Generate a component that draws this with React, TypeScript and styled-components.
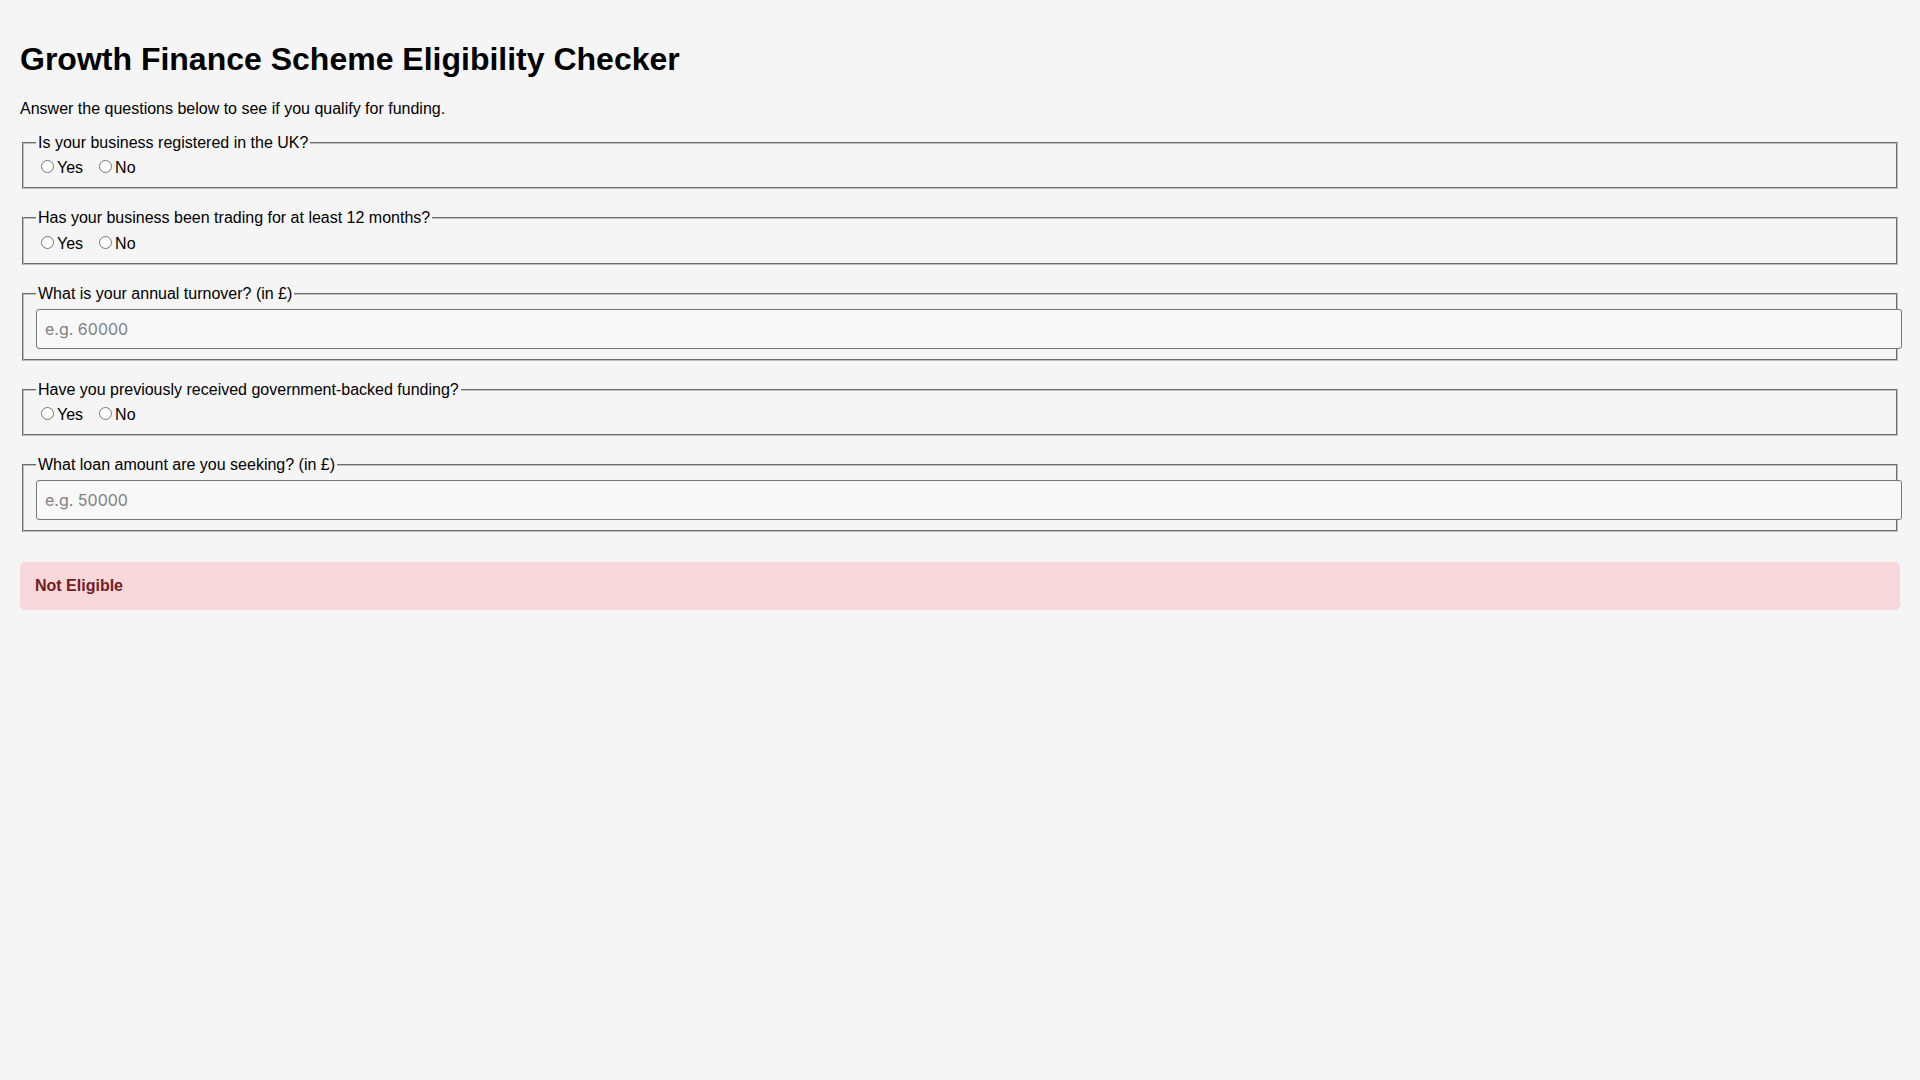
import styled, { createGlobalStyle } from 'styled-components'

const GlobalStyle = createGlobalStyle`
  body {
    margin: 0;
    padding: 20px;
    background: #f5f5f5;
    font-family: "Liberation Sans", Arial, sans-serif;
    color: #000;
  }
`

interface Question {
  id: string
  label: string
  kind: 'radio' | 'number'
  placeholder?: string
}

const QUESTIONS: Question[] = [
  { id: 'registered', label: 'Is your business registered in the UK?', kind: 'radio' },
  { id: 'trading', label: 'Has your business been trading for at least 12 months?', kind: 'radio' },
  { id: 'turnover', label: 'What is your annual turnover? (in £)', kind: 'number', placeholder: 'e.g. 60000' },
  { id: 'funding', label: 'Have you previously received government-backed funding?', kind: 'radio' },
  { id: 'loan', label: 'What loan amount are you seeking? (in £)', kind: 'number', placeholder: 'e.g. 50000' }
]

const App = () => {
  return (
    <>
      <GlobalStyle />
      <Title>Growth Finance Scheme Eligibility Checker</Title>
      <Intro>Answer the questions below to see if you qualify for funding.</Intro>
      <form onSubmit={e => e.preventDefault()}>
        {QUESTIONS.map(q => (
          <Group key={q.id}>
            <legend>{q.label}</legend>
            {q.kind === 'radio' ? (
              <>
                <Choice>
                  <input type="radio" name={q.id} value="yes" />
                  Yes
                </Choice>
                <Choice>
                  <input type="radio" name={q.id} value="no" />
                  No
                </Choice>
              </>
            ) : (
              <AmountInput type="number" name={q.id} placeholder={q.placeholder} />
            )}
          </Group>
        ))}
      </form>
      <Result>Not Eligible</Result>
    </>
  )
}

export default App

const Title = styled.h1`
  font-size: 32px;
  font-weight: bold;
  margin: 0.67em 0;
`

const Intro = styled.p`
  font-size: 16px;
  margin: 17px 0 16px;
`

const Group = styled.fieldset`
  margin: 0 2px 20px;
  padding: 0.35em 0.75em 0.625em;
  border: 2px groove rgb(192, 192, 192);

  legend {
    padding: 0 2px;
    font-size: 16px;
  }
`

const Choice = styled.label`
  font-size: 16px;
  margin-right: 11px;

  input {
    margin: 3px 3px 0 5px;
  }
`

const AmountInput = styled.input`
  width: 100%;
  height: 20px;
  padding: 9px 8px;
  border: 1px solid #767676;
  border-radius: 3px;
  background: #f8f8f8;
  font-family: Inter, sans-serif;
  font-size: 16px;
  color: #000;

  &::placeholder {
    color: #808080;
  }
`

const Result = styled.div`
  margin-top: 30px;
  padding: 15px;
  border-radius: 5px;
  background: #f8d7da;
  color: #721c24;
  font-weight: bold;
  font-size: 16px;
`
